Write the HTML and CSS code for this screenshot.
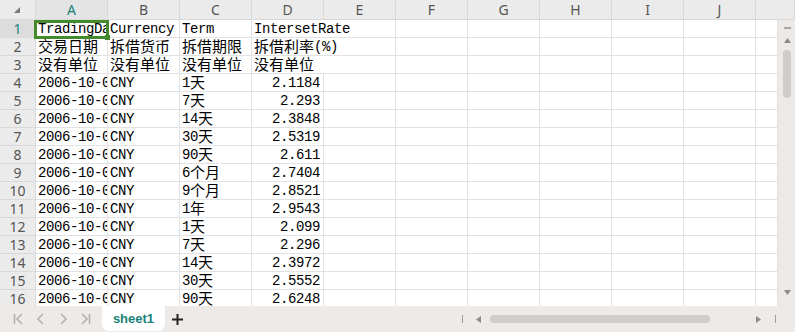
FILE: index.html
```html
<!DOCTYPE html>
<html lang="zh-CN">
<head>
    <meta charset="UTF-8">
    <title>sheet1</title>
    <link rel="stylesheet" href="styles.css">
</head>
<body>

<div class="colhead">
    <span class="corner"><svg width="6" height="6" viewBox="0 0 6 6"><polygon points="6,0 6,6 0,6" fill="#7a7a7a"/></svg></span>
    <span class="active">A</span><span>B</span><span>C</span><span>D</span><span>E</span>
    <span>F</span><span>G</span><span>H</span><span>I</span><span>J</span><span></span>
</div>

<div class="main">
    <div class="rows">
        <div class="row"><span class="rh active">1</span><span class="c">TradingDate</span><span class="c">Currency</span><span class="c">Term</span><span class="c spill">IntersetRate</span><span></span><span></span><span></span><span></span><span></span><span></span><span></span></div>
        <div class="row"><span class="rh">2</span><span class="c"><b class="zh">交易日期</b></span><span class="c"><b class="zh">拆借货币</b></span><span class="c"><b class="zh">拆借期限</b></span><span class="c spill"><b class="zh">拆借利率</b>(%)</span><span></span><span></span><span></span><span></span><span></span><span></span><span></span></div>
        <div class="row"><span class="rh">3</span><span class="c"><b class="zh">没有单位</b></span><span class="c"><b class="zh">没有单位</b></span><span class="c"><b class="zh">没有单位</b></span><span class="c spill"><b class="zh">没有单位</b></span><span></span><span></span><span></span><span></span><span></span><span></span><span></span></div>
        <div class="row"><span class="rh">4</span><span class="c">2006-10-09</span><span class="c">CNY</span><span class="c">1<b class="zh">天</b></span><span class="c num">2.1184</span><span></span><span></span><span></span><span></span><span></span><span></span><span></span></div>
        <div class="row"><span class="rh">5</span><span class="c">2006-10-09</span><span class="c">CNY</span><span class="c">7<b class="zh">天</b></span><span class="c num">2.293</span><span></span><span></span><span></span><span></span><span></span><span></span><span></span></div>
        <div class="row"><span class="rh">6</span><span class="c">2006-10-09</span><span class="c">CNY</span><span class="c">14<b class="zh">天</b></span><span class="c num">2.3848</span><span></span><span></span><span></span><span></span><span></span><span></span><span></span></div>
        <div class="row"><span class="rh">7</span><span class="c">2006-10-09</span><span class="c">CNY</span><span class="c">30<b class="zh">天</b></span><span class="c num">2.5319</span><span></span><span></span><span></span><span></span><span></span><span></span><span></span></div>
        <div class="row"><span class="rh">8</span><span class="c">2006-10-09</span><span class="c">CNY</span><span class="c">90<b class="zh">天</b></span><span class="c num">2.611</span><span></span><span></span><span></span><span></span><span></span><span></span><span></span></div>
        <div class="row"><span class="rh">9</span><span class="c">2006-10-09</span><span class="c">CNY</span><span class="c">6<b class="zh">个月</b></span><span class="c num">2.7404</span><span></span><span></span><span></span><span></span><span></span><span></span><span></span></div>
        <div class="row"><span class="rh">10</span><span class="c">2006-10-09</span><span class="c">CNY</span><span class="c">9<b class="zh">个月</b></span><span class="c num">2.8521</span><span></span><span></span><span></span><span></span><span></span><span></span><span></span></div>
        <div class="row"><span class="rh">11</span><span class="c">2006-10-09</span><span class="c">CNY</span><span class="c">1<b class="zh">年</b></span><span class="c num">2.9543</span><span></span><span></span><span></span><span></span><span></span><span></span><span></span></div>
        <div class="row"><span class="rh">12</span><span class="c">2006-10-09</span><span class="c">CNY</span><span class="c">1<b class="zh">天</b></span><span class="c num">2.099</span><span></span><span></span><span></span><span></span><span></span><span></span><span></span></div>
        <div class="row"><span class="rh">13</span><span class="c">2006-10-09</span><span class="c">CNY</span><span class="c">7<b class="zh">天</b></span><span class="c num">2.296</span><span></span><span></span><span></span><span></span><span></span><span></span><span></span></div>
        <div class="row"><span class="rh">14</span><span class="c">2006-10-09</span><span class="c">CNY</span><span class="c">14<b class="zh">天</b></span><span class="c num">2.3972</span><span></span><span></span><span></span><span></span><span></span><span></span><span></span></div>
        <div class="row"><span class="rh">15</span><span class="c">2006-10-09</span><span class="c">CNY</span><span class="c">30<b class="zh">天</b></span><span class="c num">2.5552</span><span></span><span></span><span></span><span></span><span></span><span></span><span></span></div>
        <div class="row"><span class="rh">16</span><span class="c">2006-10-09</span><span class="c">CNY</span><span class="c">90<b class="zh">天</b></span><span class="c num">2.6248</span><span></span><span></span><span></span><span></span><span></span><span></span><span></span></div>

        <!-- selected cell A1 -->
        <div class="sel"></div>
    </div>

    <div class="vscroll">
        <span class="vline"></span>
        <svg class="vup" width="7" height="5" viewBox="0 0 7 5"><polygon points="3.5,0 7,5 0,5" fill="#8c8c8c"/></svg>
        <span class="vthumb"></span>
        <svg class="vdown" width="7" height="5" viewBox="0 0 7 5"><polygon points="0,0 7,0 3.5,5" fill="#8c8c8c"/></svg>
    </div>
</div>

<div class="tabs">
    <div class="nav">
        <svg width="12" height="12" viewBox="0 0 12 12"><path d="M1.5 1v10M9 1L4 6l5 5" /></svg>
        <svg width="12" height="12" viewBox="0 0 12 12"><path d="M8 1L3 6l5 5" /></svg>
        <svg width="12" height="12" viewBox="0 0 12 12"><path d="M4 1l5 5-5 5" /></svg>
        <svg width="12" height="12" viewBox="0 0 12 12"><path d="M3 1l5 5-5 5M10.5 1v10" /></svg>
    </div>
    <div class="tab">sheet1</div>
    <svg class="add" width="11" height="11" viewBox="0 0 11 11"><path d="M5.5 0v11M0 5.5h11" /></svg>

    <div class="hscroll">
        <span class="hbar"></span>
        <svg class="hleft" width="5" height="7" viewBox="0 0 5 7"><polygon points="0,3.5 5,0 5,7" fill="#8c8c8c"/></svg>
        <span class="hthumb"></span>
        <svg class="hright" width="5" height="7" viewBox="0 0 5 7"><polygon points="0,0 5,3.5 0,7" fill="#8c8c8c"/></svg>
        <span class="hbar hbar-end"></span>
    </div>
</div>

</body>
</html>
```

FILE: styles.css
```css
* {
    box-sizing: border-box;
}

body {
    margin: 0;
    width: 795px;
    height: 332px;
    overflow: hidden;
    display: flex;
    flex-direction: column;
    background-color: #fff;
    font-family: "Noto Sans", "Liberation Sans", sans-serif;
}

/* column letters */
.colhead {
    display: grid;
    grid-template-columns: 36px repeat(10, 72px) 1fr;
    height: 20px;
    flex: none;
    background-color: #ebebeb;
    border-bottom: 1px solid #d9d9d9;
}

.colhead span {
    border-right: 1px solid #d9d9d9;
    font-size: 14px;
    line-height: 19px;
    color: #555;
    text-align: center;
}

.colhead span.active {
    background-color: #e4e4e4;
    color: #1a8379;
}

.colhead .corner {
    display: flex;
    align-items: flex-end;
    justify-content: flex-end;
    padding: 0 15px 6px 0;
}

.main {
    flex: 1;
    min-height: 0;
    display: flex;
}

.rows {
    flex: 1;
    position: relative;
    overflow: hidden;
}

.row {
    display: grid;
    grid-template-columns: 36px repeat(10, 72px) 1fr;
    height: 18px;
}

.row > span {
    border-right: 1px solid #e2e2e2;
    border-bottom: 1px solid #e2e2e2;
    overflow: hidden;
    white-space: nowrap;
}

.row > .rh {
    background-color: #ebebeb;
    border-color: #d9d9d9;
    color: #555;
    font-size: 14px;
    line-height: 17px;
    text-align: center;
}

.row > .rh.active {
    background-color: #dcdcdc;
    color: #1a8379;
}

.c {
    font-family: "Liberation Mono", "Noto Sans CJK SC", monospace;
    font-size: 14px;
    letter-spacing: -0.4px;
    line-height: 15px;
    padding: 2px 0 0 2px;
    color: #000;
}

.zh {
    font-family: "Noto Sans CJK SC", sans-serif;
    font-weight: normal;
    font-size: 15px;
    letter-spacing: 0;
    line-height: 10px;
    vertical-align: -1px;
}

.num {
    text-align: right;
    padding-right: 3px;
}

/* text running into the empty cell next to it */
.row > .spill {
    overflow: visible;
    border-right-color: transparent;
}

.sel {
    position: absolute;
    left: 34px;
    top: 0;
    width: 75px;
    height: 19px;
    border: 3px solid #438a2b;
}

.sel::after {
    content: "";
    position: absolute;
    right: -4px;
    bottom: -4px;
    width: 5px;
    height: 5px;
    background-color: #438a2b;
}

/* scrollbars */
.vscroll {
    width: 17px;
    flex: none;
    background-color: #ede9e7;
    display: flex;
    flex-direction: column;
    align-items: center;
    padding-left: 1px;
}

.vline {
    width: 7px;
    height: 2px;
    margin-top: 7px;
    background-color: #a8a8a8;
}

.vup {
    margin-top: 9px;
}

.vthumb {
    width: 8px;
    height: 48px;
    margin-top: 7px;
    border-radius: 4px;
    background-color: #cfcdcc;
}

.vdown {
    margin-top: auto;
    margin-bottom: 11px;
}

.tabs {
    height: 26px;
    flex: none;
    display: flex;
    align-items: center;
    background-color: #eeeae8;
}

.nav {
    display: flex;
    gap: 10px;
    padding-left: 13px;
}

.nav path {
    fill: none;
    stroke: #b0b0b0;
    stroke-width: 1.5;
}

.tab {
    align-self: flex-start;
    width: 63px;
    height: 25px;
    margin-left: 11px;
    background-color: #fff;
    border-radius: 0 0 7px 7px;
    font-family: "Liberation Sans", sans-serif;
    font-weight: bold;
    font-size: 13px;
    line-height: 25px;
    color: #1a8379;
    text-align: center;
}

.add {
    margin-left: 7px;
}

.add path {
    stroke: #222;
    stroke-width: 2;
}

.hscroll {
    margin-left: auto;
    width: 333px;
    display: flex;
    align-items: center;
}

.hbar {
    width: 1px;
    height: 8px;
    background-color: #999;
}

.hleft {
    margin-left: 13px;
}

.hthumb {
    width: 220px;
    height: 8px;
    margin-left: 9px;
    border-radius: 4px;
    background-color: #cfcdcc;
}

.hright {
    margin-left: 46px;
}

.hbar-end {
    margin-left: 14px;
}
```
